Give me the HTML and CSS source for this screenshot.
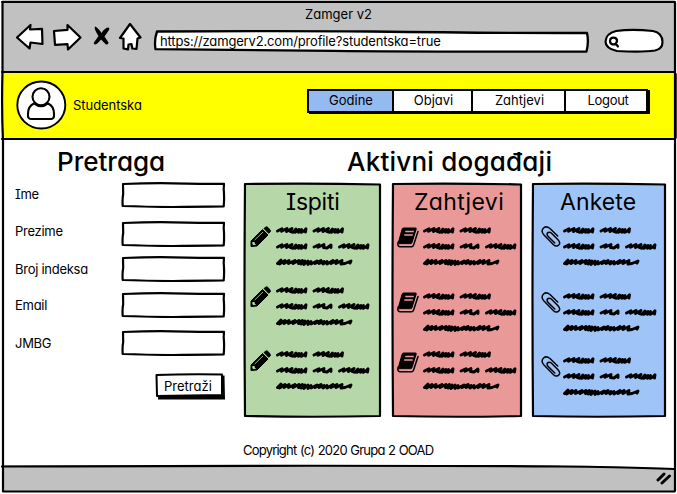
FILE: index.html
```
<!DOCTYPE html>
<html lang="bs">
<head>
<meta charset="utf-8">
<title>Zamger v2</title>
<link rel="stylesheet" href="styles.css">
</head>
<body>
<svg class="defs" width="0" height="0" aria-hidden="true">
  <symbol id="scribble" viewBox="0 0 96 40">
    <g fill="none" stroke="#000" stroke-width="2.900" stroke-linecap="round" stroke-linejoin="round">
      <path id="word" d="M2.500 5 L7 2.800 L6.500 5.300 L12 2.500 L11.500 5.500 L17 2.500 L15 5.300 L18 6.300 L21 3 L20 6.300 L24 3.500 L23.500 6.300 L26.500 3.500 L26 6.300 L29 5 L31 2.800 L30.500 6"/>
      <use href="#word" x="36.500"/>
      <use href="#word" y="16"/>
      <path d="M39 21 L44 18.700 L43 21.300 L49 18.500 L48.500 21.500 L52 22 L56 19 L56 21.500"/>
      <use href="#word" x="62" y="16"/>
      <path d="M2.500 37.500 L6 34 L4.500 38 L10 34.500 L9 37.500 L14 34.500 L13.500 37.500 L20 34.500 L18 37.500 L24 34.500 L23.500 37.500 L27.500 34.500 L26 38 L30 35 L29 38.500 L33 35 L33 38.500 L36 35.500 L36 38 L42 35 L40 37.500 L46 34.500 L44 37.500 L49 35.500 L48 38 L52 35.500 L52 38 L58 34.500 L56 37.500 L62 34.500 L61 37.500 L67 34.500 L66 38 L70 37.500 L76 35 L75 37"/>
    </g>
  </symbol>
  <symbol id="pencil" viewBox="0 0 21 21">
    <path d="M1 15 L12.500 3.500 L18 9 L7 20 L1 20.500Z" stroke="#000" stroke-linejoin="round"/>
    <path d="M14 2.500 L16 1 Q17 .5 18 1.500 L20 4 Q21 5 20 6 L18.700 7.300Z" stroke="#000" stroke-linejoin="round"/>
    <path d="M4.700 14 L13 6" stroke="#9fb394" fill="none"/>
    <path d="M2.500 16 L4.500 16 L5 18 L6.500 18.500 L3.500 19.200 L2.300 18Z" fill="#b6d7a8"/>
  </symbol>
  <symbol id="book" viewBox="0 0 22 21">
    <path d="M6.500 1 H18.500 Q19.500 1 19.200 2 L15 15.500 Q14.500 16.800 13.500 16.800 H2.500 Q1 16.800 1.500 15 L5 2.500 Q5.400 1 6.500 1Z" stroke="#000"/>
    <path d="M1.200 15 Q0 19.700 3 19.800 H14.500 Q16 19.800 16.600 18 L21 4.500" fill="none" stroke="#000" stroke-width="1.500" stroke-linecap="round"/>
    <path d="M8.300 4.500 H16.800 M7.200 8 H15.800" stroke="#ea9999" stroke-width="1.300"/>
    <path d="M3 18 H13.800" stroke="#ea9999"/>
  </symbol>
  <symbol id="clip" viewBox="0 0 20 21">
    <path d="M16.700 10 L9 2.500 C6 .2 3.500 .7 2 2.600 C.5 4.800 1 7 3 9 L12.500 18.700 C14.500 20.600 16.600 20.400 18 18.800 C19.400 17 18.500 15.300 17 13.700 L10.300 7 C8.800 5.700 7.300 6 6.500 7 C5.700 8.200 6.200 9.500 7.200 10.500 L13.800 17" fill="none" stroke="#000" stroke-width="1.500" stroke-linecap="round"/>
  </symbol>
  <symbol id="field" viewBox="0 0 105 26">
    <path d="M2 2 Q30 .9 52 1.300 Q80 1.800 103 1.800 L102.700 7 Q103.500 16 102.700 24.300 Q70 24.600 52 25 Q25 24.800 1.700 24 Q1.200 17 2.200 12Z" fill="#fff" stroke="#000" stroke-width="2.200" stroke-linejoin="round"/>
  </symbol>
</svg>

<div class="window">
  <header class="chrome">
    <div class="title">Zamger v2</div>
    <div class="toolbar">
      <svg class="nav-icons" width="126" height="30" viewBox="0 0 126 30">
        <g fill="#fff" stroke="#000" stroke-width="2.200" stroke-linejoin="round">
          <path d="M1 14.500 L14.500 2 L14 6.500 L26 5.800 L26.500 21 L14.500 19.500 L13.500 25.500Z"/>
          <path d="M38 8 L51.500 6.800 L51.500 2 L64.500 14.500 L52 26.500 L51.500 21.200 L39 21.800Z"/>
          <path d="M114 1 L124.500 14.500 L121.500 15.500 L120.500 26 L116.300 25.500 L115.500 21 L112.500 21.500 L112 26.300 L107.500 25.500 L107.500 15.500 L104 15Z"/>
        </g>
        <path d="M79 3.500 Q82 4.500 85.500 10 Q89 4.500 92.500 4.500 Q94 5 93 7 L88.500 13.500 L92.500 19.500 Q92.500 22 90 21.500 L85 16.500 Q81 21.500 79 21.500 Q76.500 21 79 18 L82.500 13 Q77.500 5.500 79 3.500Z"/>
      </svg>
      <div class="address">
        <svg class="ink" viewBox="0 0 438 23"><path d="M4 1.500 Q120 .8 218 1.500 Q340 3.200 434 3 Q436 12 433.500 21.500 Q250 21.700 180 20.800 Q80 20 2.500 19.200 Q1 10 4 1.500Z" fill="#fff" stroke="#000" stroke-width="2.300" stroke-linejoin="round"/></svg>
        <span class="url">https://zamgerv2.com/profile?studentska=true</span>
      </div>
      <svg class="search" width="60" height="26" viewBox="0 0 60 26">
        <path d="M12 3 Q28 .8 49 3 Q58.500 5 58.500 14 Q58.500 21 51 22.500 Q38 24.500 13 23 Q1.500 20.500 1.500 13.500 Q2 5.500 12 3Z" fill="#fff" stroke="#000" stroke-width="2.200"/>
        <path d="M12 10.500 C9 8.500 6 10 6 13 C6 17 11 17.500 12.500 14.500 C13.500 12.500 13 11 11.500 10 M12 16 L14 18.500" fill="none" stroke="#000" stroke-width="2.200" stroke-linecap="round"/>
      </svg>
    </div>
  </header>

  <div class="banner">
    <svg class="avatar" width="51" height="50" viewBox="0 0 51 50">
      <ellipse cx="25.300" cy="25" rx="24" ry="23.500" fill="#fff" stroke="#000" stroke-width="1.900"/>
      <path d="M18 23.500 Q12 26 12 34 Q11.500 39 15 39 H35 Q38.500 39 38 34 Q38 26 32 23.500 Q25 29 18 23.500Z" fill="#fff" stroke="#000" stroke-width="2.100"/>
      <circle cx="25" cy="16.800" r="8.500" fill="#fff" stroke="#000" stroke-width="2.100"/>
    </svg>
    <span class="user">Studentska</span>
    <nav class="tabs">
      <a class="tab active">Godine</a><a class="tab objavi">Objavi</a><a class="tab zahtjevi">Zahtjevi</a><a class="tab logout">Logout</a>
    </nav>
  </div>

  <main class="content">
    <section class="lookup">
      <h1 class="heading">Pretraga</h1>
      <div class="row r1"><label>Ime</label><svg width="105" height="26"><use href="#field"/></svg></div>
      <div class="row r2"><label>Prezime</label><svg width="105" height="26"><use href="#field"/></svg></div>
      <div class="row r3"><label>Broj indeksa</label><svg width="105" height="26"><use href="#field"/></svg></div>
      <div class="row r4"><label>Email</label><svg width="105" height="26"><use href="#field"/></svg></div>
      <div class="row r5"><label>JMBG</label><svg width="105" height="26"><use href="#field"/></svg></div>
      <div class="button">
        <svg class="ink" viewBox="0 0 70 27"><path d="M4 5 L69.500 2.500 L70 26.500 L3 26.500Z"/><path d="M1.500 2 Q30 1 67 1.500 L67 22 Q35 22.500 2 23Z" fill="#fff" stroke="#000" stroke-width="2" stroke-linejoin="round"/></svg>
        <span class="caption">Pretraži</span>
      </div>
    </section>

    <section class="events">
      <h1 class="heading wide">Aktivni događaji</h1>
      <div class="cards">
        <article class="card green">
          <svg class="ink" viewBox="0 0 139 236"><path d="M2 2 Q70 1 137 2.500 Q137.500 120 137 234 Q70 235.500 2 234 Q1 120 2 2Z" fill="#b6d7a8" stroke="#000" stroke-width="2.200" stroke-linejoin="round"/></svg>
          <h2 class="name ispiti">Ispiti</h2>
          <div class="item"><svg width="21" height="21"><use href="#pencil"/></svg><svg width="96" height="40"><use href="#scribble"/></svg></div>
          <div class="item near"><svg width="21" height="21"><use href="#pencil"/></svg><svg width="96" height="40"><use href="#scribble"/></svg></div>
          <div class="item mid"><svg width="21" height="21"><use href="#pencil"/></svg><svg width="96" height="40"><use href="#scribble"/></svg></div>
        </article>
        <article class="card red">
          <svg class="ink" viewBox="0 0 132 236"><path d="M2 2 Q65 1 130 2.500 Q130.500 120 130 234 Q65 235.500 2 234 Q1 120 2 2Z" fill="#ea9999" stroke="#000" stroke-width="2.200" stroke-linejoin="round"/></svg>
          <h2 class="name requests">Zahtjevi</h2>
          <div class="item"><svg class="low" width="22" height="21"><use href="#book"/></svg><svg width="96" height="40"><use href="#scribble"/></svg></div>
          <div class="item far"><svg width="22" height="21"><use href="#book"/></svg><svg width="96" height="40"><use href="#scribble"/></svg></div>
          <div class="item close"><svg class="lower" width="22" height="21"><use href="#book"/></svg><svg width="96" height="40"><use href="#scribble"/></svg></div>
        </article>
        <article class="card blue">
          <svg class="ink" viewBox="0 0 136 236"><path d="M2 2 Q65 1 134 2.500 Q134.500 120 134 234 Q65 235.500 2 234 Q1 120 2 2Z" fill="#9fc5f8" stroke="#000" stroke-width="2.200" stroke-linejoin="round"/></svg>
          <h2 class="name ankete">Ankete</h2>
          <div class="item"><svg width="20" height="21"><use href="#clip"/></svg><svg width="96" height="40"><use href="#scribble"/></svg></div>
          <div class="item far"><svg width="20" height="21"><use href="#clip"/></svg><svg width="96" height="40"><use href="#scribble"/></svg></div>
          <div class="item mid"><svg width="20" height="21"><use href="#clip"/></svg><svg width="96" height="40"><use href="#scribble"/></svg></div>
        </article>
      </div>
    </section>
  </main>
  <p class="copyright"><span>Copyright (c) 2020 Grupa 2 OOAD</span></p>
  <footer class="statusbar">
    <svg width="16" height="14" viewBox="0 0 16 14"><path d="M2 9 L8 3 M6 12 L13.500 5" stroke="#000" stroke-width="3" stroke-linecap="round"/></svg>
  </footer>
  <svg class="outline" width="677" height="494" viewBox="0 0 677 494">
    <path d="M560 463 H674 V468 Q610 466 560 465.500Z" fill="#fff"/>
    <g fill="none" stroke="#000" stroke-width="2.200" stroke-linecap="round">
      <path d="M2 2 H675 M2.500 2 V72 Q1.500 110 3 140 V491 M675 2 V491 M3 491.500 H674.500"/>
      <path d="M2 72 H675 M2 139 H675 M2 466.500 Q340 465 560 466.500 Q610 466.500 674 469"/>
      <path d="M676 74 V138" stroke-width="1.500"/>
    </g>
  </svg>
</div>
</body>
</html>
```
FILE: styles.css
```
* { box-sizing: border-box; }
body {
  margin: 0;
  width: 677px;
  height: 494px;
  overflow: hidden;
  background: #fff;
  color: #000;
  font: 13px/16px Inter, "Open Sans", sans-serif;
  font-feature-settings: "cv11", "cv08", "ss03";
}
h1, h2, p { margin: 0; font-weight: 400; }
svg { display: block; flex: none; }
.defs { position: absolute; }
.window {
  position: relative;
  width: 677px;
  height: 494px;
  display: flex;
  flex-direction: column;
}
.outline { position: absolute; inset: 0; pointer-events: none; }
.ink { position: absolute; inset: 0; width: 100%; height: 100%; }

.chrome { height: 72px; margin: 0 2px; padding-top: 6px; background: #c1c1c1; }
.title { text-align: center; }
.toolbar { display: flex; padding-left: 14px; }
.nav-icons { margin-top: 1px; }
.address { position: relative; width: 438px; height: 23px; margin: 8px 0 0 11px; }
.url { position: relative; display: block; padding: 3px 0 0 7px; letter-spacing: -.16px; }
.search { margin: 6px 0 0 13px; }

.banner { height: 67px; margin: 0 1px; padding: 8px 27px 0 15px; display: flex; background: #ff0; }
.user { margin: 17px 0 0 6px; letter-spacing: -.05px; }
.tabs {
  display: flex;
  height: 24px;
  width: 341px;
  margin: 9px 1px 0 auto;
  border: 2px solid #000;
  background: #fff;
  box-shadow: 2px 1px 0 #000;
}
.tab { width: 85px; padding-left: 1px; text-align: center; line-height: 19px; border-right: 2px solid #000; }
.tab.active { background: #93baf1; }
.tab.objavi { width: 79px; padding-left: 2px; }
.tab.zahtjevi { width: 93px; padding-left: 2px; }
.tab.logout { flex: 1; padding-left: 4px; letter-spacing: -.3px; border: 0; }

.content { display: flex; height: 300px; padding-top: 1px; }
.lookup { width: 243px; padding-left: 15px; }
.heading { height: 42px; padding: 4px 0 0 42px; font-size: 26px; line-height: 36px; font-weight: 500; }
.row { display: flex; height: 26px; width: 211px; justify-content: space-between; align-items: center; margin-top: 12px; }
.row label { padding-bottom: 2px; letter-spacing: -.27px; }
.row.r1 { margin-top: 0; }
.row.r2 { margin-top: 13px; }
.row.r2 label { padding-bottom: 6px; }
.row.r3 { margin-top: 9px; }
.row.r3 label { padding-bottom: 0; }
.row.r4 { margin-top: 10px; }
.row.r4 label, .row.r5 label { padding-bottom: 0; }
.button { position: relative; width: 70px; height: 27px; margin: 17px 0 0 140px; }
.caption { position: relative; display: block; padding: 5px 0 0 9px; }

.events { width: 424px; }
.heading.wide { padding-left: 104px; letter-spacing: .22px; }
.cards { display: flex; gap: 9px; }
.card { position: relative; height: 236px; padding-left: 7px; }
.green { width: 139px; }
.red { width: 132px; padding-left: 6px; }
.blue { width: 136px; padding-left: 10px; margin-left: -1px; }
.name { position: relative; height: 44px; padding-top: 4px; font-size: 23px; line-height: 32px; }
.item { position: relative; display: flex; gap: 4px; height: 40px; }
.red .item { gap: 3px; }
.blue .item { gap: 1px; }
.near { margin-top: 20px; }
.mid { margin-top: 24px; }
.far { margin-top: 26px; }
.close { margin-top: 18px; }
.low { margin-top: 1px; }
.lower { margin-top: 2px; }
.ispiti { padding-left: 36px; letter-spacing: -.25px; }
.requests { padding-left: 17px; letter-spacing: .4px; }
.ankete { padding-left: 19px; letter-spacing: .1px; }

.copyright { flex: 1; padding: 3px 0 0 243px; letter-spacing: -.78px; word-spacing: .6px; }
.statusbar { height: 27px; margin: 0 2px 2px; padding: 6px 3px 0 0; display: flex; justify-content: flex-end; background: #c1c1c1; }
```
